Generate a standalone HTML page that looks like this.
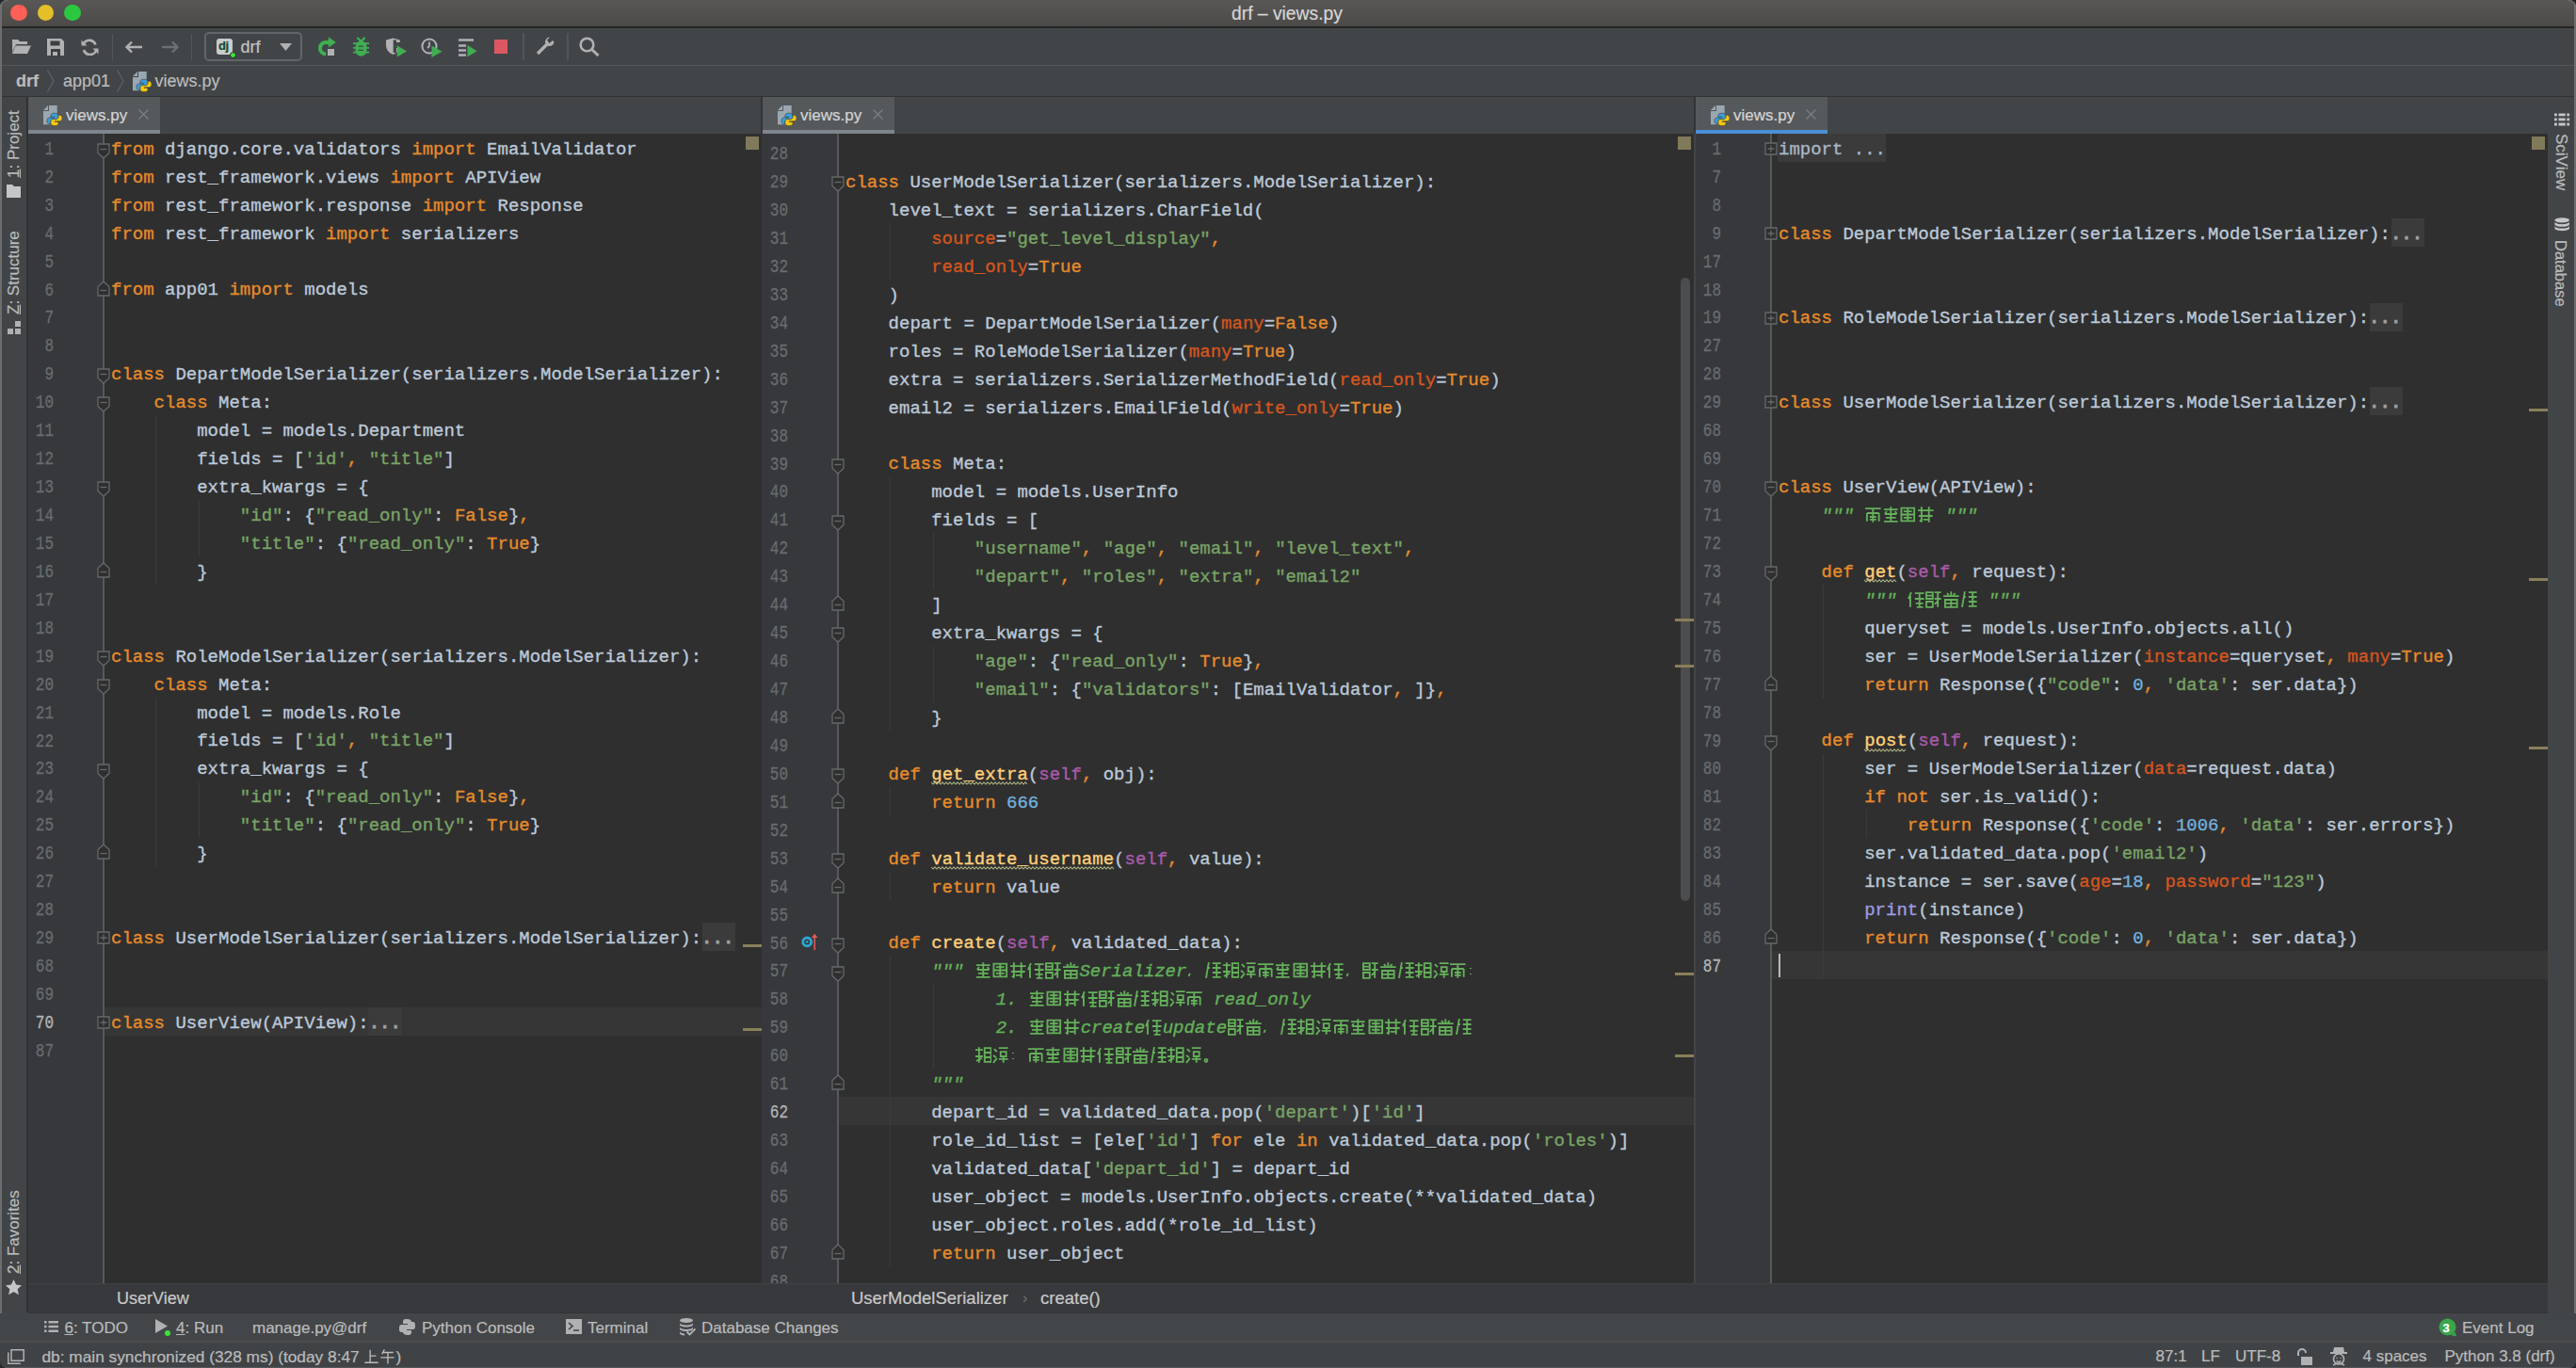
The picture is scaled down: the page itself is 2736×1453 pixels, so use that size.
<!DOCTYPE html><html><head><meta charset="utf-8"><style>
*{margin:0;padding:0;box-sizing:border-box}
html,body{width:2736px;height:1453px;overflow:hidden;background:#424548}
body{position:relative;font-family:"Liberation Sans",sans-serif}
div,svg{position:absolute}
.pane{overflow:hidden}
.ln{left:0;text-align:right;font-family:"Liberation Mono",monospace;font-size:16px;line-height:30px;-webkit-text-stroke:0.25px currentColor;transform:scaleY(1.26);transform-origin:0 19.9px}
.cl{font-family:"Liberation Mono",monospace;font-size:19px;line-height:30px;white-space:pre;color:#BCC9D9;-webkit-text-stroke:0.35px currentColor}
.cl i{font-style:normal}
.doc{color:#64B05A;font-style:italic}
.doc em{font-style:italic}
.cjs{position:static;display:inline-block;width:17px;height:17px;vertical-align:-2px;fill:none;stroke-width:1.5}
.cj{position:static;display:inline-block;width:18.6px;height:19px;vertical-align:-3px;fill:none;stroke-width:1.9}
.ph{height:30px;background:#3B3B3B}
.dots{color:#A0A0A0;-webkit-text-stroke:1.1px #A0A0A0}
.wavy{height:3px;background:repeating-linear-gradient(90deg,transparent 0 1px,#6F6F4F 1px 3px)}
.ui{font-size:17px;color:#BBBBBB;white-space:pre;line-height:20px;-webkit-text-stroke:0.2px currentColor}
.vt{transform-origin:0 0;white-space:pre;font-size:17px;color:#BBBBBB;line-height:20px;-webkit-text-stroke:0.2px currentColor}
</style></head><body>
<div style="left:0px;top:0px;width:2736px;height:28px;background:linear-gradient(#5A5856,#4C4A48)"></div>
<div style="left:0px;top:28px;width:2736px;height:2px;background:#242424"></div>
<div style="left:11.2px;top:4.7px;width:17.6px;height:17.6px;border-radius:50%;background:#FE5F57"></div>
<div style="left:39.7px;top:4.7px;width:17.6px;height:17.6px;border-radius:50%;background:#E5BF2A"></div>
<div style="left:68.2px;top:4.7px;width:17.6px;height:17.6px;border-radius:50%;background:#2AC840"></div>
<div class="ui" style="left:1308px;top:5px;font-size:19.3px;color:#D6D6D6">drf – views.py</div>
<div style="left:0px;top:30px;width:2736px;height:39px;background:#424548"></div>
<div style="left:0px;top:30px;width:2736px;height:1px;background:#484B4E"></div>
<div style="left:0px;top:69px;width:2736px;height:1.5px;background:#545658"></div>
<div style="left:0px;top:70px;width:2736px;height:32px;background:#424548"></div>
<div style="left:0px;top:102px;width:2736px;height:1px;background:#323232"></div>
<div style="left:0px;top:103px;width:28px;height:1291px;background:#424548"></div>
<div style="left:28px;top:103px;width:2px;height:1291px;background:#2F3133"></div>
<div style="left:2706px;top:103px;width:28px;height:1291px;background:#424548"></div>
<div style="left:2705px;top:103px;width:1px;height:1291px;background:#2F3133"></div>
<div style="left:0px;top:0px;width:2px;height:1453px;background:#6E6E6E"></div>
<div style="left:2734px;top:0px;width:2px;height:1453px;background:#6E6E6E"></div>
<div style="left:30px;top:103px;width:2676px;height:39px;background:#424548"></div>
<div style="left:808px;top:103px;width:2px;height:39px;#2F3133"></div>
<div style="left:30px;top:103px;width:140px;height:35px;background:#55595C"></div>
<div style="left:30px;top:138px;width:140px;height:4px;background:#7F858C"></div>
<svg style="left:45.5px;top:111.5px" width="20" height="22" viewBox="0 0 20 22"><path d="M6 0H14.7V20.2H0V6H6z" fill="#9AA7B0"/><path d="M0 5L5 0V5z" fill="#9AA7B0"/><path d="M11.8 8.2c-2.6 0-3.9 0.9-3.9 2.6v1.6h3.9v0.6H6.8c-1.7 0-2.9 1.2-2.9 3.3s1.1 3.3 2.7 3.3h1.3v-1.9c0-1.5 1-2.6 2.6-2.6h3.3c1.3 0 2.3-1 2.3-2.3v-2c0-1.5-1.4-2.6-4.3-2.6z" fill="#3D9BD6" stroke="#2B2B2B" stroke-width="0.5"/><path d="M12.2 21.6c2.6 0 3.9-0.9 3.9-2.6v-1.6h-3.9v-0.6h5.1c1.7 0 2.7-1.2 2.7-3.3s-1-3.3-2.6-3.3h-1.3v1.9c0 1.5-1 2.6-2.6 2.6h-3.3c-1.3 0-2.3 1-2.3 2.3v2c0 1.5 1.4 2.6 4.3 2.6z" fill="#F2C80F" stroke="#2B2B2B" stroke-width="0.5"/></svg>
<div class="ui" style="left:70px;top:113px;color:#D4D4D4">views.py</div>
<svg style="left:147px;top:116px" width="11" height="11" viewBox="0 0 11 11"><path d="M0.5 0.5l10 10M10.5 0.5l-10 10" stroke="#7C8084" stroke-width="1.2"/></svg>
<div style="left:810px;top:103px;width:140px;height:35px;background:#55595C"></div>
<div style="left:810px;top:138px;width:140px;height:4px;background:#7F858C"></div>
<svg style="left:825.5px;top:111.5px" width="20" height="22" viewBox="0 0 20 22"><path d="M6 0H14.7V20.2H0V6H6z" fill="#9AA7B0"/><path d="M0 5L5 0V5z" fill="#9AA7B0"/><path d="M11.8 8.2c-2.6 0-3.9 0.9-3.9 2.6v1.6h3.9v0.6H6.8c-1.7 0-2.9 1.2-2.9 3.3s1.1 3.3 2.7 3.3h1.3v-1.9c0-1.5 1-2.6 2.6-2.6h3.3c1.3 0 2.3-1 2.3-2.3v-2c0-1.5-1.4-2.6-4.3-2.6z" fill="#3D9BD6" stroke="#2B2B2B" stroke-width="0.5"/><path d="M12.2 21.6c2.6 0 3.9-0.9 3.9-2.6v-1.6h-3.9v-0.6h5.1c1.7 0 2.7-1.2 2.7-3.3s-1-3.3-2.6-3.3h-1.3v1.9c0 1.5-1 2.6-2.6 2.6h-3.3c-1.3 0-2.3 1-2.3 2.3v2c0 1.5 1.4 2.6 4.3 2.6z" fill="#F2C80F" stroke="#2B2B2B" stroke-width="0.5"/></svg>
<div class="ui" style="left:850px;top:113px;color:#D4D4D4">views.py</div>
<svg style="left:927px;top:116px" width="11" height="11" viewBox="0 0 11 11"><path d="M0.5 0.5l10 10M10.5 0.5l-10 10" stroke="#7C8084" stroke-width="1.2"/></svg>
<div style="left:1801px;top:103px;width:140px;height:35px;background:#55595C"></div>
<div style="left:1801px;top:138px;width:140px;height:4px;background:#4B8FD6"></div>
<svg style="left:1816.5px;top:111.5px" width="20" height="22" viewBox="0 0 20 22"><path d="M6 0H14.7V20.2H0V6H6z" fill="#9AA7B0"/><path d="M0 5L5 0V5z" fill="#9AA7B0"/><path d="M11.8 8.2c-2.6 0-3.9 0.9-3.9 2.6v1.6h3.9v0.6H6.8c-1.7 0-2.9 1.2-2.9 3.3s1.1 3.3 2.7 3.3h1.3v-1.9c0-1.5 1-2.6 2.6-2.6h3.3c1.3 0 2.3-1 2.3-2.3v-2c0-1.5-1.4-2.6-4.3-2.6z" fill="#3D9BD6" stroke="#2B2B2B" stroke-width="0.5"/><path d="M12.2 21.6c2.6 0 3.9-0.9 3.9-2.6v-1.6h-3.9v-0.6h5.1c1.7 0 2.7-1.2 2.7-3.3s-1-3.3-2.6-3.3h-1.3v1.9c0 1.5-1 2.6-2.6 2.6h-3.3c-1.3 0-2.3 1-2.3 2.3v2c0 1.5 1.4 2.6 4.3 2.6z" fill="#F2C80F" stroke="#2B2B2B" stroke-width="0.5"/></svg>
<div class="ui" style="left:1841px;top:113px;color:#D4D4D4">views.py</div>
<svg style="left:1918px;top:116px" width="11" height="11" viewBox="0 0 11 11"><path d="M0.5 0.5l10 10M10.5 0.5l-10 10" stroke="#7C8084" stroke-width="1.2"/></svg>
<div style="left:808px;top:103px;width:2px;height:39px;background:#323436"></div>
<div style="left:1799px;top:103px;width:2px;height:39px;background:#323436"></div>
<div class="pane" style="left:30px;top:142px;width:778.5px;height:1221px">
<div style="left:0px;top:0px;width:81px;height:1221px;background:#36383B"></div>
<div style="left:81px;top:0px;width:697.5px;height:1221px;background:#2F2F2F"></div>
<div style="left:81px;top:928.04px;width:697.5px;height:29.94px;background:#363636"></div>
<div style="left:135.22px;top:299.30000000000007px;width:1px;height:179.64000000000001px;background:#3B3B3B"></div>
<div style="left:180.94px;top:389.12px;width:1px;height:59.88px;background:#3B3B3B"></div>
<div style="left:135.22px;top:598.7px;width:1px;height:179.64000000000001px;background:#3B3B3B"></div>
<div style="left:180.94px;top:688.52px;width:1px;height:59.88px;background:#3B3B3B"></div>
<div style="left:79px;top:0px;width:1.8px;height:1221px;background:#56585A"></div>
<div class="ln" style="top:2.8000000000000056px;width:27px;color:#686C70">1</div>
<div class="cl" style="top:1.7000000000000057px;left:88px"><i style="color:#E68B2C">from</i> django.core.validators <i style="color:#E68B2C">import</i> EmailValidator</div>
<div class="ln" style="top:32.74px;width:27px;color:#686C70">2</div>
<div class="cl" style="top:31.640000000000004px;left:88px"><i style="color:#E68B2C">from</i> rest_framework.views <i style="color:#E68B2C">import</i> APIView</div>
<div class="ln" style="top:62.68px;width:27px;color:#686C70">3</div>
<div class="cl" style="top:61.58px;left:88px"><i style="color:#E68B2C">from</i> rest_framework.response <i style="color:#E68B2C">import</i> Response</div>
<div class="ln" style="top:92.62000000000003px;width:27px;color:#686C70">4</div>
<div class="cl" style="top:91.52000000000002px;left:88px"><i style="color:#E68B2C">from</i> rest_framework <i style="color:#E68B2C">import</i> serializers</div>
<div class="ln" style="top:122.56000000000003px;width:27px;color:#686C70">5</div>
<div class="ln" style="top:152.50000000000003px;width:27px;color:#686C70">6</div>
<div class="cl" style="top:151.40000000000003px;left:88px"><i style="color:#E68B2C">from</i> app01 <i style="color:#E68B2C">import</i> models</div>
<div class="ln" style="top:182.44000000000003px;width:27px;color:#686C70">7</div>
<div class="ln" style="top:212.38000000000002px;width:27px;color:#686C70">8</div>
<div class="ln" style="top:242.32000000000002px;width:27px;color:#686C70">9</div>
<div class="cl" style="top:241.22000000000003px;left:88px"><i style="color:#E68B2C">class</i> DepartModelSerializer(serializers.ModelSerializer):</div>
<div class="ln" style="top:272.26px;width:27px;color:#686C70">10</div>
<div class="cl" style="top:271.16px;left:88px">    <i style="color:#E68B2C">class</i> Meta:</div>
<div class="ln" style="top:302.20000000000005px;width:27px;color:#686C70">11</div>
<div class="cl" style="top:301.1000000000001px;left:88px">        model = models.Department</div>
<div class="ln" style="top:332.14px;width:27px;color:#686C70">12</div>
<div class="cl" style="top:331.04px;left:88px">        fields = [<i style="color:#79A366">'id'</i><i style="color:#E68B2C">,</i> <i style="color:#79A366">"title"</i>]</div>
<div class="ln" style="top:362.08000000000004px;width:27px;color:#686C70">13</div>
<div class="cl" style="top:360.9800000000001px;left:88px">        extra_kwargs = {</div>
<div class="ln" style="top:392.02px;width:27px;color:#686C70">14</div>
<div class="cl" style="top:390.92px;left:88px">            <i style="color:#79A366">"id"</i>: {<i style="color:#79A366">"read_only"</i>: <i style="color:#E68B2C">False</i>}<i style="color:#E68B2C">,</i></div>
<div class="ln" style="top:421.96000000000004px;width:27px;color:#686C70">15</div>
<div class="cl" style="top:420.86000000000007px;left:88px">            <i style="color:#79A366">"title"</i>: {<i style="color:#79A366">"read_only"</i>: <i style="color:#E68B2C">True</i>}</div>
<div class="ln" style="top:451.9px;width:27px;color:#686C70">16</div>
<div class="cl" style="top:450.8px;left:88px">        }</div>
<div class="ln" style="top:481.84000000000003px;width:27px;color:#686C70">17</div>
<div class="ln" style="top:511.78px;width:27px;color:#686C70">18</div>
<div class="ln" style="top:541.72px;width:27px;color:#686C70">19</div>
<div class="cl" style="top:540.62px;left:88px"><i style="color:#E68B2C">class</i> RoleModelSerializer(serializers.ModelSerializer):</div>
<div class="ln" style="top:571.66px;width:27px;color:#686C70">20</div>
<div class="cl" style="top:570.56px;left:88px">    <i style="color:#E68B2C">class</i> Meta:</div>
<div class="ln" style="top:601.6px;width:27px;color:#686C70">21</div>
<div class="cl" style="top:600.5px;left:88px">        model = models.Role</div>
<div class="ln" style="top:631.54px;width:27px;color:#686C70">22</div>
<div class="cl" style="top:630.4399999999999px;left:88px">        fields = [<i style="color:#79A366">'id'</i><i style="color:#E68B2C">,</i> <i style="color:#79A366">"title"</i>]</div>
<div class="ln" style="top:661.48px;width:27px;color:#686C70">23</div>
<div class="cl" style="top:660.38px;left:88px">        extra_kwargs = {</div>
<div class="ln" style="top:691.42px;width:27px;color:#686C70">24</div>
<div class="cl" style="top:690.3199999999999px;left:88px">            <i style="color:#79A366">"id"</i>: {<i style="color:#79A366">"read_only"</i>: <i style="color:#E68B2C">False</i>}<i style="color:#E68B2C">,</i></div>
<div class="ln" style="top:721.36px;width:27px;color:#686C70">25</div>
<div class="cl" style="top:720.26px;left:88px">            <i style="color:#79A366">"title"</i>: {<i style="color:#79A366">"read_only"</i>: <i style="color:#E68B2C">True</i>}</div>
<div class="ln" style="top:751.3px;width:27px;color:#686C70">26</div>
<div class="cl" style="top:750.1999999999999px;left:88px">        }</div>
<div class="ln" style="top:781.24px;width:27px;color:#686C70">27</div>
<div class="ln" style="top:811.18px;width:27px;color:#686C70">28</div>
<div class="ln" style="top:841.12px;width:27px;color:#686C70">29</div>
<div class="ph" style="top:838.22px;left:715.65px;width:35.29px"></div>
<div class="cl" style="top:840.02px;left:88px"><i style="color:#E68B2C">class</i> UserModelSerializer(serializers.ModelSerializer):<i class="dots">...</i></div>
<div class="ln" style="top:871.06px;width:27px;color:#686C70">68</div>
<div class="ln" style="top:901.0000000000001px;width:27px;color:#686C70">69</div>
<div class="ln" style="top:930.9399999999999px;width:27px;color:#B4B4B4">70</div>
<div class="ph" style="top:928.04px;left:361.32px;width:35.29px"></div>
<div class="cl" style="top:929.8399999999999px;left:88px"><i style="color:#E68B2C">class</i> UserView(APIView):<i class="dots">...</i></div>
<div class="ln" style="top:960.88px;width:27px;color:#686C70">87</div>
<svg class="fm" style="left:72.8px;top:9.900000000000006px" width="14" height="17" viewBox="0 0 14 17"><path d="M1 1h12v9.5l-6 5.5l-6-5.5z" fill="#2F2F2F" stroke="#65686A" stroke-width="1.3"/><path d="M3.5 6.5h7" stroke="#65686A" stroke-width="1.3"/></svg>
<svg class="fm" style="left:72.8px;top:155.60000000000002px" width="14" height="17" viewBox="0 0 14 17"><path d="M1 16h-0v-9.5l6-5.5l6 5.5v9.5z" fill="#2F2F2F" stroke="#65686A" stroke-width="1.3"/><path d="M3.5 10.5h7" stroke="#65686A" stroke-width="1.3"/></svg>
<svg class="fm" style="left:72.8px;top:249.42000000000002px" width="14" height="17" viewBox="0 0 14 17"><path d="M1 1h12v9.5l-6 5.5l-6-5.5z" fill="#2F2F2F" stroke="#65686A" stroke-width="1.3"/><path d="M3.5 6.5h7" stroke="#65686A" stroke-width="1.3"/></svg>
<svg class="fm" style="left:72.8px;top:279.36px" width="14" height="17" viewBox="0 0 14 17"><path d="M1 1h12v9.5l-6 5.5l-6-5.5z" fill="#2F2F2F" stroke="#65686A" stroke-width="1.3"/><path d="M3.5 6.5h7" stroke="#65686A" stroke-width="1.3"/></svg>
<svg class="fm" style="left:72.8px;top:369.18000000000006px" width="14" height="17" viewBox="0 0 14 17"><path d="M1 1h12v9.5l-6 5.5l-6-5.5z" fill="#2F2F2F" stroke="#65686A" stroke-width="1.3"/><path d="M3.5 6.5h7" stroke="#65686A" stroke-width="1.3"/></svg>
<svg class="fm" style="left:72.8px;top:455.0px" width="14" height="17" viewBox="0 0 14 17"><path d="M1 16h-0v-9.5l6-5.5l6 5.5v9.5z" fill="#2F2F2F" stroke="#65686A" stroke-width="1.3"/><path d="M3.5 10.5h7" stroke="#65686A" stroke-width="1.3"/></svg>
<svg class="fm" style="left:72.8px;top:548.82px" width="14" height="17" viewBox="0 0 14 17"><path d="M1 1h12v9.5l-6 5.5l-6-5.5z" fill="#2F2F2F" stroke="#65686A" stroke-width="1.3"/><path d="M3.5 6.5h7" stroke="#65686A" stroke-width="1.3"/></svg>
<svg class="fm" style="left:72.8px;top:578.76px" width="14" height="17" viewBox="0 0 14 17"><path d="M1 1h12v9.5l-6 5.5l-6-5.5z" fill="#2F2F2F" stroke="#65686A" stroke-width="1.3"/><path d="M3.5 6.5h7" stroke="#65686A" stroke-width="1.3"/></svg>
<svg class="fm" style="left:72.8px;top:668.58px" width="14" height="17" viewBox="0 0 14 17"><path d="M1 1h12v9.5l-6 5.5l-6-5.5z" fill="#2F2F2F" stroke="#65686A" stroke-width="1.3"/><path d="M3.5 6.5h7" stroke="#65686A" stroke-width="1.3"/></svg>
<svg class="fm" style="left:72.8px;top:754.4px" width="14" height="17" viewBox="0 0 14 17"><path d="M1 16h-0v-9.5l6-5.5l6 5.5v9.5z" fill="#2F2F2F" stroke="#65686A" stroke-width="1.3"/><path d="M3.5 10.5h7" stroke="#65686A" stroke-width="1.3"/></svg>
<svg class="fm" style="left:72.8px;top:847.22px" width="14" height="14" viewBox="0 0 14 14"><path d="M1 1h12v12h-12z" fill="#2F2F2F" stroke="#65686A" stroke-width="1.3"/><path d="M3.5 7h7M7 3.5v7" stroke="#65686A" stroke-width="1.3"/></svg>
<svg class="fm" style="left:72.8px;top:937.04px" width="14" height="14" viewBox="0 0 14 14"><path d="M1 1h12v12h-12z" fill="#2F2F2F" stroke="#65686A" stroke-width="1.3"/><path d="M3.5 7h7M7 3.5v7" stroke="#65686A" stroke-width="1.3"/></svg>
<div style="left:761.5px;top:3px;width:14px;height:14px;background:#807A5A"></div>
<div style="left:758.5px;top:861px;width:20px;height:3px;background:#8A7F5A"></div>
<div style="left:758.5px;top:950px;width:20px;height:3px;background:#8A7F5A"></div>

</div>
<div class="pane" style="left:808.5px;top:142px;width:990.5px;height:1221px">
<div style="left:0px;top:0px;width:82.5px;height:1221px;background:#36383B"></div>
<div style="left:82.5px;top:0px;width:908px;height:1221px;background:#2F2F2F"></div>
<div style="left:82.5px;top:1023.26px;width:908px;height:29.94px;background:#363636"></div>
<div style="left:136.72000000000003px;top:95.12px;width:1px;height:59.88px;background:#3B3B3B"></div>
<div style="left:136.72000000000003px;top:364.58000000000004px;width:1px;height:269.46000000000004px;background:#3B3B3B"></div>
<div style="left:182.44000000000005px;top:424.46000000000004px;width:1px;height:59.88px;background:#3B3B3B"></div>
<div style="left:182.44000000000005px;top:544.22px;width:1px;height:59.88px;background:#3B3B3B"></div>
<div style="left:136.72000000000003px;top:693.9200000000001px;width:1px;height:29.94px;background:#3B3B3B"></div>
<div style="left:136.72000000000003px;top:783.74px;width:1px;height:29.94px;background:#3B3B3B"></div>
<div style="left:136.72000000000003px;top:873.56px;width:1px;height:329.34000000000003px;background:#3B3B3B"></div>
<div style="left:182.44000000000005px;top:903.5px;width:1px;height:89.82000000000001px;background:#3B3B3B"></div>
<div style="left:80.5px;top:0px;width:1.8px;height:1221px;background:#56585A"></div>
<div class="ln" style="top:8.200000000000012px;width:28.5px;color:#686C70">28</div>
<div class="ln" style="top:38.14000000000001px;width:28.5px;color:#686C70">29</div>
<div class="cl" style="top:37.040000000000006px;left:89.5px"><i style="color:#E68B2C">class</i> UserModelSerializer(serializers.ModelSerializer):</div>
<div class="ln" style="top:68.08000000000001px;width:28.5px;color:#686C70">30</div>
<div class="cl" style="top:66.98px;left:89.5px">    level_text = serializers.CharField(</div>
<div class="ln" style="top:98.02000000000001px;width:28.5px;color:#686C70">31</div>
<div class="cl" style="top:96.92px;left:89.5px">        <i style="color:#D4561F">source</i>=<i style="color:#79A366">"get_level_display"</i><i style="color:#E68B2C">,</i></div>
<div class="ln" style="top:127.96000000000001px;width:28.5px;color:#686C70">32</div>
<div class="cl" style="top:126.86px;left:89.5px">        <i style="color:#D4561F">read_only</i>=<i style="color:#E68B2C">True</i></div>
<div class="ln" style="top:157.9px;width:28.5px;color:#686C70">33</div>
<div class="cl" style="top:156.8px;left:89.5px">    )</div>
<div class="ln" style="top:187.84000000000006px;width:28.5px;color:#686C70">34</div>
<div class="cl" style="top:186.74000000000007px;left:89.5px">    depart = DepartModelSerializer(<i style="color:#D4561F">many</i>=<i style="color:#E68B2C">False</i>)</div>
<div class="ln" style="top:217.78px;width:28.5px;color:#686C70">35</div>
<div class="cl" style="top:216.68px;left:89.5px">    roles = RoleModelSerializer(<i style="color:#D4561F">many</i>=<i style="color:#E68B2C">True</i>)</div>
<div class="ln" style="top:247.72000000000006px;width:28.5px;color:#686C70">36</div>
<div class="cl" style="top:246.62000000000006px;left:89.5px">    extra = serializers.SerializerMethodField(<i style="color:#D4561F">read_only</i>=<i style="color:#E68B2C">True</i>)</div>
<div class="ln" style="top:277.66px;width:28.5px;color:#686C70">37</div>
<div class="cl" style="top:276.56000000000006px;left:89.5px">    email2 = serializers.EmailField(<i style="color:#D4561F">write_only</i>=<i style="color:#E68B2C">True</i>)</div>
<div class="ln" style="top:307.6px;width:28.5px;color:#686C70">38</div>
<div class="ln" style="top:337.54px;width:28.5px;color:#686C70">39</div>
<div class="cl" style="top:336.44000000000005px;left:89.5px">    <i style="color:#E68B2C">class</i> Meta:</div>
<div class="ln" style="top:367.48px;width:28.5px;color:#686C70">40</div>
<div class="cl" style="top:366.38000000000005px;left:89.5px">        model = models.UserInfo</div>
<div class="ln" style="top:397.41999999999996px;width:28.5px;color:#686C70">41</div>
<div class="cl" style="top:396.32px;left:89.5px">        fields = [</div>
<div class="ln" style="top:427.36px;width:28.5px;color:#686C70">42</div>
<div class="cl" style="top:426.26000000000005px;left:89.5px">            <i style="color:#79A366">"username"</i><i style="color:#E68B2C">,</i> <i style="color:#79A366">"age"</i><i style="color:#E68B2C">,</i> <i style="color:#79A366">"email"</i><i style="color:#E68B2C">,</i> <i style="color:#79A366">"level_text"</i><i style="color:#E68B2C">,</i></div>
<div class="ln" style="top:457.30000000000007px;width:28.5px;color:#686C70">43</div>
<div class="cl" style="top:456.2000000000001px;left:89.5px">            <i style="color:#79A366">"depart"</i><i style="color:#E68B2C">,</i> <i style="color:#79A366">"roles"</i><i style="color:#E68B2C">,</i> <i style="color:#79A366">"extra"</i><i style="color:#E68B2C">,</i> <i style="color:#79A366">"email2"</i></div>
<div class="ln" style="top:487.24px;width:28.5px;color:#686C70">44</div>
<div class="cl" style="top:486.14000000000004px;left:89.5px">        ]</div>
<div class="ln" style="top:517.18px;width:28.5px;color:#686C70">45</div>
<div class="cl" style="top:516.0799999999999px;left:89.5px">        extra_kwargs = {</div>
<div class="ln" style="top:547.12px;width:28.5px;color:#686C70">46</div>
<div class="cl" style="top:546.02px;left:89.5px">            <i style="color:#79A366">"age"</i>: {<i style="color:#79A366">"read_only"</i>: <i style="color:#E68B2C">True</i>}<i style="color:#E68B2C">,</i></div>
<div class="ln" style="top:577.0600000000001px;width:28.5px;color:#686C70">47</div>
<div class="cl" style="top:575.96px;left:89.5px">            <i style="color:#79A366">"email"</i>: {<i style="color:#79A366">"validators"</i>: [EmailValidator<i style="color:#E68B2C">,</i> ]}<i style="color:#E68B2C">,</i></div>
<div class="ln" style="top:607.0000000000001px;width:28.5px;color:#686C70">48</div>
<div class="cl" style="top:605.9000000000001px;left:89.5px">        }</div>
<div class="ln" style="top:636.9399999999999px;width:28.5px;color:#686C70">49</div>
<div class="ln" style="top:666.88px;width:28.5px;color:#686C70">50</div>
<div class="cl" style="top:665.78px;left:89.5px">    <i style="color:#E68B2C">def</i> <i style="color:#FFD078">get_extra</i>(<i style="color:#A95BAB">self</i><i style="color:#E68B2C">,</i> obj):</div>
<div class="ln" style="top:696.82px;width:28.5px;color:#686C70">51</div>
<div class="cl" style="top:695.72px;left:89.5px">        <i style="color:#E68B2C">return</i> <i style="color:#72B0DE">666</i></div>
<div class="ln" style="top:726.7600000000001px;width:28.5px;color:#686C70">52</div>
<div class="ln" style="top:756.6999999999999px;width:28.5px;color:#686C70">53</div>
<div class="cl" style="top:755.5999999999999px;left:89.5px">    <i style="color:#E68B2C">def</i> <i style="color:#FFD078">validate_username</i>(<i style="color:#A95BAB">self</i><i style="color:#E68B2C">,</i> value):</div>
<div class="ln" style="top:786.64px;width:28.5px;color:#686C70">54</div>
<div class="cl" style="top:785.54px;left:89.5px">        <i style="color:#E68B2C">return</i> value</div>
<div class="ln" style="top:816.58px;width:28.5px;color:#686C70">55</div>
<div class="ln" style="top:846.5200000000001px;width:28.5px;color:#686C70">56</div>
<div class="cl" style="top:845.4200000000001px;left:89.5px">    <i style="color:#E68B2C">def</i> <i style="color:#FFD078">create</i>(<i style="color:#A95BAB">self</i><i style="color:#E68B2C">,</i> validated_data):</div>
<div class="ln" style="top:876.4599999999999px;width:28.5px;color:#686C70">57</div>
<div class="cl doc" style="top:875.3599999999999px;left:89.5px">        """ <svg class="cj" viewBox="0 0 19 19"><path d="M2 4h15M9.5 1v17M3 9h13M4 13h11M2 17h15M5 6l-2 3M14 6l2 3" stroke="#64B05A"/></svg><svg class="cj" viewBox="0 0 19 19"><path d="M2.5 2.5h14v14h-14zM2.5 9.5h14M9.5 2.5v14M5 6h9M5 13h9" stroke="#64B05A"/></svg><svg class="cj" viewBox="0 0 19 19"><path d="M1 5h17M5 1v17M13 1v17M2 11h15M7 15h5M3 17l3-3" stroke="#64B05A"/></svg><svg class="cj" viewBox="0 0 19 19"><path d="M4 2l-3 7M3 6v12M8 3h10M13 3v15M8 9h10M9 14h8M10 18h7" stroke="#64B05A"/></svg><svg class="cj" viewBox="0 0 19 19"><path d="M2 2h7v7h-7zM2 5.5h7M11 2h7M14.5 2v16M11 9h7M2 12h7v6h-7zM11 15l3-3" stroke="#64B05A"/></svg><svg class="cj" viewBox="0 0 19 19"><path d="M1 6h17M9.5 1v5M3 10h13v8h-13zM3 14h13M9.5 10v8M5 3l2 2M14 3l-2 2" stroke="#64B05A"/></svg><em>Serializer</em><svg class="cj" viewBox="0 0 19 19"><path d="M4 13l-1.5 3" stroke="#64B05A"/></svg><svg class="cj" viewBox="0 0 19 19"><path d="M5 1l-3 17M3 7h3M9 2h9M9 7h9M9 12h9M9 17h9M13.5 2v15" stroke="#64B05A"/></svg><svg class="cj" viewBox="0 0 19 19"><path d="M1 4h8M5 1v17M1 11h8M2 16l6-3M11 2h7v15h-7zM11 7h7M11 12h7" stroke="#64B05A"/></svg><svg class="cj" viewBox="0 0 19 19"><path d="M3 3l3 3M2 10l3 2M2 18l4-5M8 2h10M10 6h6v5h-6zM8 14h10M13 11v7" stroke="#64B05A"/></svg><svg class="cj" viewBox="0 0 19 19"><path d="M1 3h17M9.5 3v15M3 8h13M3 8v9M16 8v9M6 12h7M6 15h7" stroke="#64B05A"/></svg><svg class="cj" viewBox="0 0 19 19"><path d="M2 4h15M9.5 1v17M3 9h13M4 13h11M2 17h15M5 6l-2 3M14 6l2 3" stroke="#64B05A"/></svg><svg class="cj" viewBox="0 0 19 19"><path d="M2.5 2.5h14v14h-14zM2.5 9.5h14M9.5 2.5v14M5 6h9M5 13h9" stroke="#64B05A"/></svg><svg class="cj" viewBox="0 0 19 19"><path d="M1 5h17M5 1v17M13 1v17M2 11h15M7 15h5M3 17l3-3" stroke="#64B05A"/></svg><svg class="cj" viewBox="0 0 19 19"><path d="M4 2l-3 7M3 6v12M8 3h10M13 3v15M8 9h10M9 14h8M10 18h7" stroke="#64B05A"/></svg><svg class="cj" viewBox="0 0 19 19"><path d="M4 13l-1.5 3" stroke="#64B05A"/></svg><svg class="cj" viewBox="0 0 19 19"><path d="M2 2h7v7h-7zM2 5.5h7M11 2h7M14.5 2v16M11 9h7M2 12h7v6h-7zM11 15l3-3" stroke="#64B05A"/></svg><svg class="cj" viewBox="0 0 19 19"><path d="M1 6h17M9.5 1v5M3 10h13v8h-13zM3 14h13M9.5 10v8M5 3l2 2M14 3l-2 2" stroke="#64B05A"/></svg><svg class="cj" viewBox="0 0 19 19"><path d="M5 1l-3 17M3 7h3M9 2h9M9 7h9M9 12h9M9 17h9M13.5 2v15" stroke="#64B05A"/></svg><svg class="cj" viewBox="0 0 19 19"><path d="M1 4h8M5 1v17M1 11h8M2 16l6-3M11 2h7v15h-7zM11 7h7M11 12h7" stroke="#64B05A"/></svg><svg class="cj" viewBox="0 0 19 19"><path d="M3 3l3 3M2 10l3 2M2 18l4-5M8 2h10M10 6h6v5h-6zM8 14h10M13 11v7" stroke="#64B05A"/></svg><svg class="cj" viewBox="0 0 19 19"><path d="M1 3h17M9.5 3v15M3 8h13M3 8v9M16 8v9M6 12h7M6 15h7" stroke="#64B05A"/></svg><svg class="cj" viewBox="0 0 19 19"><path d="M4 7v1M4 13v1" stroke="#64B05A"/></svg></div>
<div class="ln" style="top:906.4px;width:28.5px;color:#686C70">58</div>
<div class="cl doc" style="top:905.3px;left:89.5px">              1. <svg class="cj" viewBox="0 0 19 19"><path d="M2 4h15M9.5 1v17M3 9h13M4 13h11M2 17h15M5 6l-2 3M14 6l2 3" stroke="#64B05A"/></svg><svg class="cj" viewBox="0 0 19 19"><path d="M2.5 2.5h14v14h-14zM2.5 9.5h14M9.5 2.5v14M5 6h9M5 13h9" stroke="#64B05A"/></svg><svg class="cj" viewBox="0 0 19 19"><path d="M1 5h17M5 1v17M13 1v17M2 11h15M7 15h5M3 17l3-3" stroke="#64B05A"/></svg><svg class="cj" viewBox="0 0 19 19"><path d="M4 2l-3 7M3 6v12M8 3h10M13 3v15M8 9h10M9 14h8M10 18h7" stroke="#64B05A"/></svg><svg class="cj" viewBox="0 0 19 19"><path d="M2 2h7v7h-7zM2 5.5h7M11 2h7M14.5 2v16M11 9h7M2 12h7v6h-7zM11 15l3-3" stroke="#64B05A"/></svg><svg class="cj" viewBox="0 0 19 19"><path d="M1 6h17M9.5 1v5M3 10h13v8h-13zM3 14h13M9.5 10v8M5 3l2 2M14 3l-2 2" stroke="#64B05A"/></svg><svg class="cj" viewBox="0 0 19 19"><path d="M5 1l-3 17M3 7h3M9 2h9M9 7h9M9 12h9M9 17h9M13.5 2v15" stroke="#64B05A"/></svg><svg class="cj" viewBox="0 0 19 19"><path d="M1 4h8M5 1v17M1 11h8M2 16l6-3M11 2h7v15h-7zM11 7h7M11 12h7" stroke="#64B05A"/></svg><svg class="cj" viewBox="0 0 19 19"><path d="M3 3l3 3M2 10l3 2M2 18l4-5M8 2h10M10 6h6v5h-6zM8 14h10M13 11v7" stroke="#64B05A"/></svg><svg class="cj" viewBox="0 0 19 19"><path d="M1 3h17M9.5 3v15M3 8h13M3 8v9M16 8v9M6 12h7M6 15h7" stroke="#64B05A"/></svg> <em>read_only</em></div>
<div class="ln" style="top:936.34px;width:28.5px;color:#686C70">59</div>
<div class="cl doc" style="top:935.24px;left:89.5px">              2. <svg class="cj" viewBox="0 0 19 19"><path d="M2 4h15M9.5 1v17M3 9h13M4 13h11M2 17h15M5 6l-2 3M14 6l2 3" stroke="#64B05A"/></svg><svg class="cj" viewBox="0 0 19 19"><path d="M2.5 2.5h14v14h-14zM2.5 9.5h14M9.5 2.5v14M5 6h9M5 13h9" stroke="#64B05A"/></svg><svg class="cj" viewBox="0 0 19 19"><path d="M1 5h17M5 1v17M13 1v17M2 11h15M7 15h5M3 17l3-3" stroke="#64B05A"/></svg><em>create</em><svg class="cj" viewBox="0 0 19 19"><path d="M4 2l-3 7M3 6v12M8 3h10M13 3v15M8 9h10M9 14h8M10 18h7" stroke="#64B05A"/></svg><em>update</em><svg class="cj" viewBox="0 0 19 19"><path d="M2 2h7v7h-7zM2 5.5h7M11 2h7M14.5 2v16M11 9h7M2 12h7v6h-7zM11 15l3-3" stroke="#64B05A"/></svg><svg class="cj" viewBox="0 0 19 19"><path d="M1 6h17M9.5 1v5M3 10h13v8h-13zM3 14h13M9.5 10v8M5 3l2 2M14 3l-2 2" stroke="#64B05A"/></svg><svg class="cj" viewBox="0 0 19 19"><path d="M4 13l-1.5 3" stroke="#64B05A"/></svg><svg class="cj" viewBox="0 0 19 19"><path d="M5 1l-3 17M3 7h3M9 2h9M9 7h9M9 12h9M9 17h9M13.5 2v15" stroke="#64B05A"/></svg><svg class="cj" viewBox="0 0 19 19"><path d="M1 4h8M5 1v17M1 11h8M2 16l6-3M11 2h7v15h-7zM11 7h7M11 12h7" stroke="#64B05A"/></svg><svg class="cj" viewBox="0 0 19 19"><path d="M3 3l3 3M2 10l3 2M2 18l4-5M8 2h10M10 6h6v5h-6zM8 14h10M13 11v7" stroke="#64B05A"/></svg><svg class="cj" viewBox="0 0 19 19"><path d="M1 3h17M9.5 3v15M3 8h13M3 8v9M16 8v9M6 12h7M6 15h7" stroke="#64B05A"/></svg><svg class="cj" viewBox="0 0 19 19"><path d="M2 4h15M9.5 1v17M3 9h13M4 13h11M2 17h15M5 6l-2 3M14 6l2 3" stroke="#64B05A"/></svg><svg class="cj" viewBox="0 0 19 19"><path d="M2.5 2.5h14v14h-14zM2.5 9.5h14M9.5 2.5v14M5 6h9M5 13h9" stroke="#64B05A"/></svg><svg class="cj" viewBox="0 0 19 19"><path d="M1 5h17M5 1v17M13 1v17M2 11h15M7 15h5M3 17l3-3" stroke="#64B05A"/></svg><svg class="cj" viewBox="0 0 19 19"><path d="M4 2l-3 7M3 6v12M8 3h10M13 3v15M8 9h10M9 14h8M10 18h7" stroke="#64B05A"/></svg><svg class="cj" viewBox="0 0 19 19"><path d="M2 2h7v7h-7zM2 5.5h7M11 2h7M14.5 2v16M11 9h7M2 12h7v6h-7zM11 15l3-3" stroke="#64B05A"/></svg><svg class="cj" viewBox="0 0 19 19"><path d="M1 6h17M9.5 1v5M3 10h13v8h-13zM3 14h13M9.5 10v8M5 3l2 2M14 3l-2 2" stroke="#64B05A"/></svg><svg class="cj" viewBox="0 0 19 19"><path d="M5 1l-3 17M3 7h3M9 2h9M9 7h9M9 12h9M9 17h9M13.5 2v15" stroke="#64B05A"/></svg></div>
<div class="ln" style="top:966.2800000000001px;width:28.5px;color:#686C70">60</div>
<div class="cl doc" style="top:965.1800000000001px;left:89.5px">            <svg class="cj" viewBox="0 0 19 19"><path d="M1 4h8M5 1v17M1 11h8M2 16l6-3M11 2h7v15h-7zM11 7h7M11 12h7" stroke="#64B05A"/></svg><svg class="cj" viewBox="0 0 19 19"><path d="M3 3l3 3M2 10l3 2M2 18l4-5M8 2h10M10 6h6v5h-6zM8 14h10M13 11v7" stroke="#64B05A"/></svg><svg class="cj" viewBox="0 0 19 19"><path d="M4 7v1M4 13v1" stroke="#64B05A"/></svg><svg class="cj" viewBox="0 0 19 19"><path d="M1 3h17M9.5 3v15M3 8h13M3 8v9M16 8v9M6 12h7M6 15h7" stroke="#64B05A"/></svg><svg class="cj" viewBox="0 0 19 19"><path d="M2 4h15M9.5 1v17M3 9h13M4 13h11M2 17h15M5 6l-2 3M14 6l2 3" stroke="#64B05A"/></svg><svg class="cj" viewBox="0 0 19 19"><path d="M2.5 2.5h14v14h-14zM2.5 9.5h14M9.5 2.5v14M5 6h9M5 13h9" stroke="#64B05A"/></svg><svg class="cj" viewBox="0 0 19 19"><path d="M1 5h17M5 1v17M13 1v17M2 11h15M7 15h5M3 17l3-3" stroke="#64B05A"/></svg><svg class="cj" viewBox="0 0 19 19"><path d="M4 2l-3 7M3 6v12M8 3h10M13 3v15M8 9h10M9 14h8M10 18h7" stroke="#64B05A"/></svg><svg class="cj" viewBox="0 0 19 19"><path d="M2 2h7v7h-7zM2 5.5h7M11 2h7M14.5 2v16M11 9h7M2 12h7v6h-7zM11 15l3-3" stroke="#64B05A"/></svg><svg class="cj" viewBox="0 0 19 19"><path d="M1 6h17M9.5 1v5M3 10h13v8h-13zM3 14h13M9.5 10v8M5 3l2 2M14 3l-2 2" stroke="#64B05A"/></svg><svg class="cj" viewBox="0 0 19 19"><path d="M5 1l-3 17M3 7h3M9 2h9M9 7h9M9 12h9M9 17h9M13.5 2v15" stroke="#64B05A"/></svg><svg class="cj" viewBox="0 0 19 19"><path d="M1 4h8M5 1v17M1 11h8M2 16l6-3M11 2h7v15h-7zM11 7h7M11 12h7" stroke="#64B05A"/></svg><svg class="cj" viewBox="0 0 19 19"><path d="M3 3l3 3M2 10l3 2M2 18l4-5M8 2h10M10 6h6v5h-6zM8 14h10M13 11v7" stroke="#64B05A"/></svg><svg class="cj" viewBox="0 0 19 19"><path d="M4 14a1.5 1.5 0 1 0 0.1 0" stroke="#64B05A"/></svg></div>
<div class="ln" style="top:996.2200000000001px;width:28.5px;color:#686C70">61</div>
<div class="cl doc" style="top:995.1200000000001px;left:89.5px">        """</div>
<div class="ln" style="top:1026.16px;width:28.5px;color:#B4B4B4">62</div>
<div class="cl" style="top:1025.06px;left:89.5px">        depart_id = validated_data.pop(<i style="color:#79A366">'depart'</i>)[<i style="color:#79A366">'id'</i>]</div>
<div class="ln" style="top:1056.1000000000001px;width:28.5px;color:#686C70">63</div>
<div class="cl" style="top:1055.0px;left:89.5px">        role_id_list = [ele[<i style="color:#79A366">'id'</i>] <i style="color:#E68B2C">for</i> ele <i style="color:#E68B2C">in</i> validated_data.pop(<i style="color:#79A366">'roles'</i>)]</div>
<div class="ln" style="top:1086.0400000000002px;width:28.5px;color:#686C70">64</div>
<div class="cl" style="top:1084.94px;left:89.5px">        validated_data[<i style="color:#79A366">'depart_id'</i>] = depart_id</div>
<div class="ln" style="top:1115.98px;width:28.5px;color:#686C70">65</div>
<div class="cl" style="top:1114.8799999999999px;left:89.5px">        user_object = models.UserInfo.objects.create(**validated_data)</div>
<div class="ln" style="top:1145.92px;width:28.5px;color:#686C70">66</div>
<div class="cl" style="top:1144.82px;left:89.5px">        user_object.roles.add(*role_id_list)</div>
<div class="ln" style="top:1175.8600000000001px;width:28.5px;color:#686C70">67</div>
<div class="cl" style="top:1174.76px;left:89.5px">        <i style="color:#E68B2C">return</i> user_object</div>
<div class="ln" style="top:1205.8000000000002px;width:28.5px;color:#686C70">68</div>
<svg style="left:180.94px;top:687.98px" width="102.87" height="4"><polyline points="0 0.8 2 3 4 0.8 6 3 8 0.8 10 3 12 0.8 14 3 16 0.8 18 3 20 0.8 22 3 24 0.8 26 3 28 0.8 30 3 32 0.8 34 3 36 0.8 38 3 40 0.8 42 3 44 0.8 46 3 48 0.8 50 3 52 0.8 54 3 56 0.8 58 3 60 0.8 62 3 64 0.8 66 3 68 0.8 70 3 72 0.8 74 3 76 0.8 78 3 80 0.8 82 3 84 0.8 86 3 88 0.8 90 3 92 0.8 94 3 96 0.8 98 3 100 0.8 102 3" fill="none" stroke="#A9AE80" stroke-width="1.1"/></svg>
<svg style="left:180.94px;top:777.8px" width="194.31" height="4"><polyline points="0 0.8 2 3 4 0.8 6 3 8 0.8 10 3 12 0.8 14 3 16 0.8 18 3 20 0.8 22 3 24 0.8 26 3 28 0.8 30 3 32 0.8 34 3 36 0.8 38 3 40 0.8 42 3 44 0.8 46 3 48 0.8 50 3 52 0.8 54 3 56 0.8 58 3 60 0.8 62 3 64 0.8 66 3 68 0.8 70 3 72 0.8 74 3 76 0.8 78 3 80 0.8 82 3 84 0.8 86 3 88 0.8 90 3 92 0.8 94 3 96 0.8 98 3 100 0.8 102 3 104 0.8 106 3 108 0.8 110 3 112 0.8 114 3 116 0.8 118 3 120 0.8 122 3 124 0.8 126 3 128 0.8 130 3 132 0.8 134 3 136 0.8 138 3 140 0.8 142 3 144 0.8 146 3 148 0.8 150 3 152 0.8 154 3 156 0.8 158 3 160 0.8 162 3 164 0.8 166 3 168 0.8 170 3 172 0.8 174 3 176 0.8 178 3 180 0.8 182 3 184 0.8 186 3 188 0.8 190 3 192 0.8 194 3" fill="none" stroke="#A9AE80" stroke-width="1.1"/></svg>
<svg class="fm" style="left:74.3px;top:45.24000000000001px" width="14" height="17" viewBox="0 0 14 17"><path d="M1 1h12v9.5l-6 5.5l-6-5.5z" fill="#2F2F2F" stroke="#65686A" stroke-width="1.3"/><path d="M3.5 6.5h7" stroke="#65686A" stroke-width="1.3"/></svg>
<svg class="fm" style="left:74.3px;top:344.64000000000004px" width="14" height="17" viewBox="0 0 14 17"><path d="M1 1h12v9.5l-6 5.5l-6-5.5z" fill="#2F2F2F" stroke="#65686A" stroke-width="1.3"/><path d="M3.5 6.5h7" stroke="#65686A" stroke-width="1.3"/></svg>
<svg class="fm" style="left:74.3px;top:404.52px" width="14" height="17" viewBox="0 0 14 17"><path d="M1 1h12v9.5l-6 5.5l-6-5.5z" fill="#2F2F2F" stroke="#65686A" stroke-width="1.3"/><path d="M3.5 6.5h7" stroke="#65686A" stroke-width="1.3"/></svg>
<svg class="fm" style="left:74.3px;top:490.34000000000003px" width="14" height="17" viewBox="0 0 14 17"><path d="M1 16h-0v-9.5l6-5.5l6 5.5v9.5z" fill="#2F2F2F" stroke="#65686A" stroke-width="1.3"/><path d="M3.5 10.5h7" stroke="#65686A" stroke-width="1.3"/></svg>
<svg class="fm" style="left:74.3px;top:524.28px" width="14" height="17" viewBox="0 0 14 17"><path d="M1 1h12v9.5l-6 5.5l-6-5.5z" fill="#2F2F2F" stroke="#65686A" stroke-width="1.3"/><path d="M3.5 6.5h7" stroke="#65686A" stroke-width="1.3"/></svg>
<svg class="fm" style="left:74.3px;top:610.1000000000001px" width="14" height="17" viewBox="0 0 14 17"><path d="M1 16h-0v-9.5l6-5.5l6 5.5v9.5z" fill="#2F2F2F" stroke="#65686A" stroke-width="1.3"/><path d="M3.5 10.5h7" stroke="#65686A" stroke-width="1.3"/></svg>
<svg class="fm" style="left:74.3px;top:673.98px" width="14" height="17" viewBox="0 0 14 17"><path d="M1 1h12v9.5l-6 5.5l-6-5.5z" fill="#2F2F2F" stroke="#65686A" stroke-width="1.3"/><path d="M3.5 6.5h7" stroke="#65686A" stroke-width="1.3"/></svg>
<svg class="fm" style="left:74.3px;top:699.9200000000001px" width="14" height="17" viewBox="0 0 14 17"><path d="M1 16h-0v-9.5l6-5.5l6 5.5v9.5z" fill="#2F2F2F" stroke="#65686A" stroke-width="1.3"/><path d="M3.5 10.5h7" stroke="#65686A" stroke-width="1.3"/></svg>
<svg class="fm" style="left:74.3px;top:763.8px" width="14" height="17" viewBox="0 0 14 17"><path d="M1 1h12v9.5l-6 5.5l-6-5.5z" fill="#2F2F2F" stroke="#65686A" stroke-width="1.3"/><path d="M3.5 6.5h7" stroke="#65686A" stroke-width="1.3"/></svg>
<svg class="fm" style="left:74.3px;top:789.74px" width="14" height="17" viewBox="0 0 14 17"><path d="M1 16h-0v-9.5l6-5.5l6 5.5v9.5z" fill="#2F2F2F" stroke="#65686A" stroke-width="1.3"/><path d="M3.5 10.5h7" stroke="#65686A" stroke-width="1.3"/></svg>
<svg class="fm" style="left:74.3px;top:853.6200000000001px" width="14" height="17" viewBox="0 0 14 17"><path d="M1 1h12v9.5l-6 5.5l-6-5.5z" fill="#2F2F2F" stroke="#65686A" stroke-width="1.3"/><path d="M3.5 6.5h7" stroke="#65686A" stroke-width="1.3"/></svg>
<svg class="fm" style="left:74.3px;top:883.56px" width="14" height="17" viewBox="0 0 14 17"><path d="M1 1h12v9.5l-6 5.5l-6-5.5z" fill="#2F2F2F" stroke="#65686A" stroke-width="1.3"/><path d="M3.5 6.5h7" stroke="#65686A" stroke-width="1.3"/></svg>
<svg class="fm" style="left:74.3px;top:999.3200000000002px" width="14" height="17" viewBox="0 0 14 17"><path d="M1 16h-0v-9.5l6-5.5l6 5.5v9.5z" fill="#2F2F2F" stroke="#65686A" stroke-width="1.3"/><path d="M3.5 10.5h7" stroke="#65686A" stroke-width="1.3"/></svg>
<svg class="fm" style="left:74.3px;top:1178.96px" width="14" height="17" viewBox="0 0 14 17"><path d="M1 16h-0v-9.5l6-5.5l6 5.5v9.5z" fill="#2F2F2F" stroke="#65686A" stroke-width="1.3"/><path d="M3.5 10.5h7" stroke="#65686A" stroke-width="1.3"/></svg>
<div style="left:976.5px;top:153px;width:10px;height:662px;background:#4C4D4E;border-radius:5px"></div>
<div style="left:973.5px;top:3px;width:14px;height:14px;background:#807A5A"></div>
<div style="left:970.5px;top:515px;width:20px;height:3px;background:#8A7F5A"></div>
<div style="left:970.5px;top:564px;width:20px;height:3px;background:#8A7F5A"></div>
<div style="left:970.5px;top:891px;width:20px;height:3px;background:#8A7F5A"></div>
<div style="left:970.5px;top:978px;width:20px;height:3px;background:#8A7F5A"></div>
<svg style="left:42px;top:848px" width="20" height="20" viewBox="0 0 20 20"><circle cx="6.2" cy="10.4" r="4.4" fill="none" stroke="#2EA6CF" stroke-width="2.9"/><circle cx="6.2" cy="10.4" r="1.3" fill="#2EA6CF"/><path d="M13.4 5.5h1.6V19h-1.6z" fill="#E35A5C"/><path d="M10.9 6l3.3-4.2l3.3 4.2z" fill="#E35A5C"/></svg>
</div>
<div class="pane" style="left:1801px;top:142px;width:905px;height:1221px">
<div style="left:0px;top:0px;width:81px;height:1221px;background:#36383B"></div>
<div style="left:81px;top:0px;width:824px;height:1221px;background:#2F2F2F"></div>
<div style="left:81px;top:868.16px;width:824px;height:29.94px;background:#363636"></div>
<div style="left:135.22000000000003px;top:478.94000000000005px;width:1px;height:119.76px;background:#3B3B3B"></div>
<div style="left:135.22000000000003px;top:658.58px;width:1px;height:239.52px;background:#3B3B3B"></div>
<div style="left:180.94000000000005px;top:718.46px;width:1px;height:29.94px;background:#3B3B3B"></div>
<div style="left:79px;top:0px;width:1.8px;height:1221px;background:#56585A"></div>
<div class="ln" style="top:2.8000000000000056px;width:27px;color:#686C70">1</div>
<div class="ph" style="top:-0.09999999999999432px;left:87px;width:115.3px"></div>
<div class="cl" style="top:1.7000000000000057px;left:88px;color:#A9B7C6">import ...</div>
<div class="ln" style="top:32.74px;width:27px;color:#686C70">7</div>
<div class="ln" style="top:62.68px;width:27px;color:#686C70">8</div>
<div class="ln" style="top:92.62000000000003px;width:27px;color:#686C70">9</div>
<div class="ph" style="top:89.72000000000003px;left:738.51px;width:35.29px"></div>
<div class="cl" style="top:91.52000000000002px;left:88px"><i style="color:#E68B2C">class</i> DepartModelSerializer(serializers.ModelSerializer):<i class="dots">...</i></div>
<div class="ln" style="top:122.56000000000003px;width:27px;color:#686C70">17</div>
<div class="ln" style="top:152.50000000000003px;width:27px;color:#686C70">18</div>
<div class="ln" style="top:182.44000000000003px;width:27px;color:#686C70">19</div>
<div class="ph" style="top:179.54000000000002px;left:715.65px;width:35.29px"></div>
<div class="cl" style="top:181.34000000000003px;left:88px"><i style="color:#E68B2C">class</i> RoleModelSerializer(serializers.ModelSerializer):<i class="dots">...</i></div>
<div class="ln" style="top:212.38000000000002px;width:27px;color:#686C70">27</div>
<div class="ln" style="top:242.32000000000002px;width:27px;color:#686C70">28</div>
<div class="ln" style="top:272.26px;width:27px;color:#686C70">29</div>
<div class="ph" style="top:269.36px;left:715.65px;width:35.29px"></div>
<div class="cl" style="top:271.16px;left:88px"><i style="color:#E68B2C">class</i> UserModelSerializer(serializers.ModelSerializer):<i class="dots">...</i></div>
<div class="ln" style="top:302.20000000000005px;width:27px;color:#686C70">68</div>
<div class="ln" style="top:332.14px;width:27px;color:#686C70">69</div>
<div class="ln" style="top:362.08000000000004px;width:27px;color:#686C70">70</div>
<div class="cl" style="top:360.9800000000001px;left:88px"><i style="color:#E68B2C">class</i> UserView(APIView):</div>
<div class="ln" style="top:392.02px;width:27px;color:#686C70">71</div>
<div class="cl doc" style="top:390.92px;left:88px">    """ <svg class="cj" viewBox="0 0 19 19"><path d="M1 3h17M9.5 3v15M3 8h13M3 8v9M16 8v9M6 12h7M6 15h7" stroke="#64B05A"/></svg><svg class="cj" viewBox="0 0 19 19"><path d="M2 4h15M9.5 1v17M3 9h13M4 13h11M2 17h15M5 6l-2 3M14 6l2 3" stroke="#64B05A"/></svg><svg class="cj" viewBox="0 0 19 19"><path d="M2.5 2.5h14v14h-14zM2.5 9.5h14M9.5 2.5v14M5 6h9M5 13h9" stroke="#64B05A"/></svg><svg class="cj" viewBox="0 0 19 19"><path d="M1 5h17M5 1v17M13 1v17M2 11h15M7 15h5M3 17l3-3" stroke="#64B05A"/></svg> """</div>
<div class="ln" style="top:421.96000000000004px;width:27px;color:#686C70">72</div>
<div class="ln" style="top:451.9px;width:27px;color:#686C70">73</div>
<div class="cl" style="top:450.8px;left:88px">    <i style="color:#E68B2C">def</i> <i style="color:#FFD078">get</i>(<i style="color:#A95BAB">self</i><i style="color:#E68B2C">,</i> request):</div>
<div class="ln" style="top:481.84000000000003px;width:27px;color:#686C70">74</div>
<div class="cl doc" style="top:480.74000000000007px;left:88px">        """ <svg class="cj" viewBox="0 0 19 19"><path d="M4 2l-3 7M3 6v12M8 3h10M13 3v15M8 9h10M9 14h8M10 18h7" stroke="#64B05A"/></svg><svg class="cj" viewBox="0 0 19 19"><path d="M2 2h7v7h-7zM2 5.5h7M11 2h7M14.5 2v16M11 9h7M2 12h7v6h-7zM11 15l3-3" stroke="#64B05A"/></svg><svg class="cj" viewBox="0 0 19 19"><path d="M1 6h17M9.5 1v5M3 10h13v8h-13zM3 14h13M9.5 10v8M5 3l2 2M14 3l-2 2" stroke="#64B05A"/></svg><svg class="cj" viewBox="0 0 19 19"><path d="M5 1l-3 17M3 7h3M9 2h9M9 7h9M9 12h9M9 17h9M13.5 2v15" stroke="#64B05A"/></svg> """</div>
<div class="ln" style="top:511.78px;width:27px;color:#686C70">75</div>
<div class="cl" style="top:510.68px;left:88px">        queryset = models.UserInfo.objects.all()</div>
<div class="ln" style="top:541.72px;width:27px;color:#686C70">76</div>
<div class="cl" style="top:540.62px;left:88px">        ser = UserModelSerializer(<i style="color:#D4561F">instance</i>=queryset<i style="color:#E68B2C">,</i> <i style="color:#D4561F">many</i>=<i style="color:#E68B2C">True</i>)</div>
<div class="ln" style="top:571.66px;width:27px;color:#686C70">77</div>
<div class="cl" style="top:570.56px;left:88px">        <i style="color:#E68B2C">return</i> Response({<i style="color:#79A366">"code"</i>: <i style="color:#72B0DE">0</i><i style="color:#E68B2C">,</i> <i style="color:#79A366">'data'</i>: ser.data})</div>
<div class="ln" style="top:601.6px;width:27px;color:#686C70">78</div>
<div class="ln" style="top:631.54px;width:27px;color:#686C70">79</div>
<div class="cl" style="top:630.4399999999999px;left:88px">    <i style="color:#E68B2C">def</i> <i style="color:#FFD078">post</i>(<i style="color:#A95BAB">self</i><i style="color:#E68B2C">,</i> request):</div>
<div class="ln" style="top:661.48px;width:27px;color:#686C70">80</div>
<div class="cl" style="top:660.38px;left:88px">        ser = UserModelSerializer(<i style="color:#D4561F">data</i>=request.data)</div>
<div class="ln" style="top:691.42px;width:27px;color:#686C70">81</div>
<div class="cl" style="top:690.3199999999999px;left:88px">        <i style="color:#E68B2C">if</i> <i style="color:#E68B2C">not</i> ser.is_valid():</div>
<div class="ln" style="top:721.36px;width:27px;color:#686C70">82</div>
<div class="cl" style="top:720.26px;left:88px">            <i style="color:#E68B2C">return</i> Response({<i style="color:#79A366">'code'</i>: <i style="color:#72B0DE">1006</i><i style="color:#E68B2C">,</i> <i style="color:#79A366">'data'</i>: ser.errors})</div>
<div class="ln" style="top:751.3px;width:27px;color:#686C70">83</div>
<div class="cl" style="top:750.1999999999999px;left:88px">        ser.validated_data.pop(<i style="color:#79A366">'email2'</i>)</div>
<div class="ln" style="top:781.24px;width:27px;color:#686C70">84</div>
<div class="cl" style="top:780.14px;left:88px">        instance = ser.save(<i style="color:#D4561F">age</i>=<i style="color:#72B0DE">18</i><i style="color:#E68B2C">,</i> <i style="color:#D4561F">password</i>=<i style="color:#79A366">"123"</i>)</div>
<div class="ln" style="top:811.18px;width:27px;color:#686C70">85</div>
<div class="cl" style="top:810.0799999999999px;left:88px">        <i style="color:#9B9BE2">print</i>(instance)</div>
<div class="ln" style="top:841.12px;width:27px;color:#686C70">86</div>
<div class="cl" style="top:840.02px;left:88px">        <i style="color:#E68B2C">return</i> Response({<i style="color:#79A366">'code'</i>: <i style="color:#72B0DE">0</i><i style="color:#E68B2C">,</i> <i style="color:#79A366">'data'</i>: ser.data})</div>
<div class="ln" style="top:871.06px;width:27px;color:#B4B4B4">87</div>
<svg style="left:179.44px;top:473.0px" width="34.29" height="4"><polyline points="0 0.8 2 3 4 0.8 6 3 8 0.8 10 3 12 0.8 14 3 16 0.8 18 3 20 0.8 22 3 24 0.8 26 3 28 0.8 30 3 32 0.8 34 3" fill="none" stroke="#A9AE80" stroke-width="1.1"/></svg>
<svg style="left:179.44px;top:652.64px" width="45.72" height="4"><polyline points="0 0.8 2 3 4 0.8 6 3 8 0.8 10 3 12 0.8 14 3 16 0.8 18 3 20 0.8 22 3 24 0.8 26 3 28 0.8 30 3 32 0.8 34 3 36 0.8 38 3 40 0.8 42 3 44 0.8" fill="none" stroke="#A9AE80" stroke-width="1.1"/></svg>
<svg class="fm" style="left:72.8px;top:8.900000000000006px" width="14" height="14" viewBox="0 0 14 14"><path d="M1 1h12v12h-12z" fill="#2F2F2F" stroke="#65686A" stroke-width="1.3"/><path d="M3.5 7h7M7 3.5v7" stroke="#65686A" stroke-width="1.3"/></svg>
<svg class="fm" style="left:72.8px;top:98.72000000000003px" width="14" height="14" viewBox="0 0 14 14"><path d="M1 1h12v12h-12z" fill="#2F2F2F" stroke="#65686A" stroke-width="1.3"/><path d="M3.5 7h7M7 3.5v7" stroke="#65686A" stroke-width="1.3"/></svg>
<svg class="fm" style="left:72.8px;top:188.54000000000002px" width="14" height="14" viewBox="0 0 14 14"><path d="M1 1h12v12h-12z" fill="#2F2F2F" stroke="#65686A" stroke-width="1.3"/><path d="M3.5 7h7M7 3.5v7" stroke="#65686A" stroke-width="1.3"/></svg>
<svg class="fm" style="left:72.8px;top:278.36px" width="14" height="14" viewBox="0 0 14 14"><path d="M1 1h12v12h-12z" fill="#2F2F2F" stroke="#65686A" stroke-width="1.3"/><path d="M3.5 7h7M7 3.5v7" stroke="#65686A" stroke-width="1.3"/></svg>
<svg class="fm" style="left:72.8px;top:369.18000000000006px" width="14" height="17" viewBox="0 0 14 17"><path d="M1 1h12v9.5l-6 5.5l-6-5.5z" fill="#2F2F2F" stroke="#65686A" stroke-width="1.3"/><path d="M3.5 6.5h7" stroke="#65686A" stroke-width="1.3"/></svg>
<svg class="fm" style="left:72.8px;top:459.0px" width="14" height="17" viewBox="0 0 14 17"><path d="M1 1h12v9.5l-6 5.5l-6-5.5z" fill="#2F2F2F" stroke="#65686A" stroke-width="1.3"/><path d="M3.5 6.5h7" stroke="#65686A" stroke-width="1.3"/></svg>
<svg class="fm" style="left:72.8px;top:574.76px" width="14" height="17" viewBox="0 0 14 17"><path d="M1 16h-0v-9.5l6-5.5l6 5.5v9.5z" fill="#2F2F2F" stroke="#65686A" stroke-width="1.3"/><path d="M3.5 10.5h7" stroke="#65686A" stroke-width="1.3"/></svg>
<svg class="fm" style="left:72.8px;top:638.64px" width="14" height="17" viewBox="0 0 14 17"><path d="M1 1h12v9.5l-6 5.5l-6-5.5z" fill="#2F2F2F" stroke="#65686A" stroke-width="1.3"/><path d="M3.5 6.5h7" stroke="#65686A" stroke-width="1.3"/></svg>
<svg class="fm" style="left:72.8px;top:844.22px" width="14" height="17" viewBox="0 0 14 17"><path d="M1 16h-0v-9.5l6-5.5l6 5.5v9.5z" fill="#2F2F2F" stroke="#65686A" stroke-width="1.3"/><path d="M3.5 10.5h7" stroke="#65686A" stroke-width="1.3"/></svg>
<div style="left:888px;top:3px;width:14px;height:14px;background:#807A5A"></div>
<div style="left:885px;top:292px;width:20px;height:3px;background:#8A7F5A"></div>
<div style="left:885px;top:472px;width:20px;height:3px;background:#8A7F5A"></div>
<div style="left:885px;top:651px;width:20px;height:3px;background:#8A7F5A"></div>

</div>
<div style="left:1889px;top:1013px;width:2px;height:25px;background:#BBBBBB"></div>
<div style="left:30px;top:1363px;width:2676px;height:31px;background:#38393C"></div>
<div style="left:30px;top:1363px;width:2676px;height:1px;background:#404246"></div>
<div style="left:30px;top:1394px;width:2676px;height:1px;background:#333436"></div>
<div class="ui" style="left:124px;top:1369px;font-size:18px;color:#C8C8C8">UserView</div>
<div class="ui" style="left:904px;top:1369px;font-size:18.5px;color:#C8C8C8">UserModelSerializer</div>
<div class="ui" style="left:1086px;top:1369px;font-size:16px;color:#6E7072">›</div>
<div class="ui" style="left:1105px;top:1369px;font-size:18.5px;color:#C8C8C8">create()</div>
<div style="left:0px;top:1395px;width:2736px;height:29px;background:#434649"></div>
<div style="left:0px;top:1424px;width:2736px;height:1.5px;background:#4D4D4D"></div>
<div style="left:0px;top:1425.5px;width:2736px;height:27.5px;background:#404346"></div>
<div style="left:0px;top:1452px;width:2736px;height:1px;background:#55585A"></div>
<svg style="left:12px;top:41px" width="22" height="17" viewBox="0 0 22 17"><path d="M1 1h6l2 2h8v3H5L1 14z" fill="#AFB1B3"/><path d="M4.5 7.5h16.5l-4 8.5H0.8z" fill="#AFB1B3"/></svg>
<svg style="left:49.5px;top:41px" width="18" height="18" viewBox="0 0 18 18"><path d="M0 0h15l3 3v15H0z" fill="#AFB1B3"/><path d="M3.5 2.5h10v5h-10z" fill="#3C3F41"/><path d="M4 11h10v7H4z" fill="#3C3F41"/><path d="M6 14h5v4H6z" fill="#AFB1B3"/></svg>
<svg style="left:86px;top:40.5px" width="19" height="18" viewBox="0 0 19 18"><path d="M15.5 6.5A7 7 0 0 0 3 5" fill="none" stroke="#AFB1B3" stroke-width="2.6"/><path d="M3 12A7 7 0 0 0 16 13" fill="none" stroke="#AFB1B3" stroke-width="2.6"/><path d="M0.5 1.5v6h6z" fill="#AFB1B3"/><path d="M18.5 16.5v-6h-6z" fill="#AFB1B3"/></svg>
<div style="left:118.5px;top:35.5px;width:1.5px;height:28px;background:#535658"></div>
<svg style="left:132px;top:42.5px" width="20" height="14" viewBox="0 0 20 14"><path d="M19 7H3M8 1.5L2.5 7L8 12.5" fill="none" stroke="#AFB1B3" stroke-width="2.4"/></svg>
<svg style="left:170.5px;top:42.5px" width="20" height="14" viewBox="0 0 20 14"><path d="M1 7h16M12 1.5L17.5 7L12 12.5" fill="none" stroke="#6D7072" stroke-width="2.4"/></svg>
<div style="left:202.5px;top:35.5px;width:1.5px;height:28px;background:#535658"></div>
<div style="left:217px;top:34px;width:104px;height:31px;border:2px solid #636668;border-radius:5px"></div>
<div style="left:229.5px;top:41px;width:17px;height:17px;background:#C9CBCC;border-radius:3px"></div>
<div class="ui" style="left:232px;top:38.5px;font-size:13px;font-weight:bold;color:#0C4B33;letter-spacing:-0.5px">dj</div>
<div style="left:243.5px;top:55px;width:7px;height:7px;border-radius:50%;background:#3BE13B;border:1px solid #2A2C2E"></div>
<div class="ui" style="left:255.5px;top:40px;font-size:18px;color:#C4C4C4">drf</div>
<svg style="left:297px;top:46px" width="13" height="8" viewBox="0 0 13 8"><path d="M0 0h13L6.5 8z" fill="#AFB1B3"/></svg>
<svg style="left:337px;top:39px" width="21" height="22" viewBox="0 0 21 22"><path d="M12.5 5.9H9.2A6.3 6.3 0 0 0 9.2 18.5" fill="none" stroke="#3FAF52" stroke-width="4"/><path d="M11.8 0.3L19.9 5.9L11.8 11.4z" fill="#3FAF52"/><path d="M11 13h7v7h-7z" fill="#AFB1B3"/></svg>
<svg style="left:375px;top:39px" width="18" height="21" viewBox="0 0 18 21"><path d="M5 1.5L8.5 5L12 1.5" fill="none" stroke="#3FAF52" stroke-width="2.2" stroke-linecap="round"/><path d="M8.5 4.5c3.5 0 6 2.5 6 6.5v3c0 4-2.5 6.5-6 6.5s-6-2.5-6-6.5v-3c0-4 2.5-6.5 6-6.5z" fill="#3FAF52"/><path d="M0 7.2h17M0 11.9h17M0 16.6h17" stroke="#3FAF52" stroke-width="1.8"/><path d="M5.6 9.4h5.4v1.4H5.6zM5.6 13.7h5.4v1.4H5.6z" fill="#424548"/></svg>
<svg style="left:410px;top:40px" width="23" height="21" viewBox="0 0 23 21"><path d="M0 2.5L7.4 0.5L14.8 2.5V8c0 5-3.5 8.5-7.4 10C3.5 16.5 0 13 0 8z" fill="#AFB1B3"/><path d="M7.7 2.6H11V16H7.7zM11 5.1h4v6h-4z" fill="#424548"/><path d="M11.8 8.2l10.2 6.2L11.8 20.6z" fill="#3FAF52"/></svg>
<svg style="left:447px;top:40px" width="23" height="21" viewBox="0 0 23 21"><circle cx="9" cy="9" r="7.6" fill="none" stroke="#AFB1B3" stroke-width="2"/><path d="M9 4.5v4.5l-2 2" fill="none" stroke="#AFB1B3" stroke-width="1.8"/><path d="M11.5 8.5l11 6.2L11.5 21z" fill="#3FAF52"/></svg>
<svg style="left:485.5px;top:41px" width="21" height="20" viewBox="0 0 21 20"><path d="M1 1.5h16M1 7.5h8M1 12.5h8M1 17.5h8" stroke="#AFB1B3" stroke-width="2.4"/><path d="M10.5 7l10 6.3L10.5 19.5z" fill="#3FAF52"/></svg>
<div style="left:524.5px;top:42px;width:14.5px;height:15px;background:#DB5860"></div>
<div style="left:555px;top:35px;width:1.5px;height:29px;background:#535658"></div>
<svg style="left:569px;top:39px" width="21" height="20" viewBox="0 0 21 20"><path d="M19.5 5.5a5 5 0 0 1-6.8 4.2L3.2 19.2L0.8 16.8l9.5-9.5A5 5 0 0 1 15 0.5l-3 3l2.5 3.5l3.5-3z" fill="#AFB1B3"/></svg>
<div style="left:602px;top:35px;width:1.5px;height:29px;background:#535658"></div>
<svg style="left:615px;top:39px" width="22" height="21" viewBox="0 0 22 21"><circle cx="8.5" cy="8.5" r="6.8" fill="none" stroke="#AFB1B3" stroke-width="2.6"/><path d="M13.5 13.5l7 6.5" stroke="#AFB1B3" stroke-width="3"/></svg>
<div class="ui" style="left:17px;top:76px;font-size:18px;font-weight:bold;color:#BBBBBB">drf</div>
<svg style="left:50px;top:74px" width="8" height="24" viewBox="0 0 8 24"><path d="M0.5 0.5l6.5 11.5l-6.5 11.5" fill="none" stroke="#5E6163" stroke-width="1.3"/></svg>
<div class="ui" style="left:67px;top:76px;font-size:18px;color:#BBBBBB">app01</div>
<svg style="left:124px;top:74px" width="8" height="24" viewBox="0 0 8 24"><path d="M0.5 0.5l6.5 11.5l-6.5 11.5" fill="none" stroke="#5E6163" stroke-width="1.3"/></svg>
<svg style="left:140.5px;top:76px" width="20" height="22" viewBox="0 0 20 22"><path d="M6 0H14.7V20.2H0V6H6z" fill="#9AA7B0"/><path d="M0 5L5 0V5z" fill="#9AA7B0"/><path d="M11.8 8.2c-2.6 0-3.9 0.9-3.9 2.6v1.6h3.9v0.6H6.8c-1.7 0-2.9 1.2-2.9 3.3s1.1 3.3 2.7 3.3h1.3v-1.9c0-1.5 1-2.6 2.6-2.6h3.3c1.3 0 2.3-1 2.3-2.3v-2c0-1.5-1.4-2.6-4.3-2.6z" fill="#3D9BD6" stroke="#2B2B2B" stroke-width="0.5"/><path d="M12.2 21.6c2.6 0 3.9-0.9 3.9-2.6v-1.6h-3.9v-0.6h5.1c1.7 0 2.7-1.2 2.7-3.3s-1-3.3-2.6-3.3h-1.3v1.9c0 1.5-1 2.6-2.6 2.6h-3.3c-1.3 0-2.3 1-2.3 2.3v2c0 1.5 1.4 2.6 4.3 2.6z" fill="#F2C80F" stroke="#2B2B2B" stroke-width="0.5"/></svg>
<div class="ui" style="left:164.5px;top:76px;font-size:18px;color:#BBBBBB">views.py</div>
<div class="vt" style="left:4.5px;top:189px;font-size:17px;transform:rotate(-90deg)"><u>1</u>: Project</div>
<svg style="left:7px;top:196px" width="15" height="14" viewBox="0 0 15 14"><path d="M0 0h6l2 2h7v12H0z" fill="#C4C6C8"/></svg>
<div class="vt" style="left:4.5px;top:334px;font-size:17px;transform:rotate(-90deg)"><u>Z</u>: Structure</div>
<svg style="left:8px;top:341px" width="14" height="14" viewBox="0 0 14 14"><path d="M0 8h6v6H0zM8 8h6v6H8zM8 0h6v6H8z" fill="#AFB1B3"/></svg>
<div class="vt" style="left:4.5px;top:1353px;font-size:17px;transform:rotate(-90deg)"><u>2</u>: Favorites</div>
<svg style="left:5.5px;top:1359px" width="17" height="17" viewBox="0 0 17 17"><path d="M8.5 0l2.6 5.6l6 0.6l-4.5 4l1.3 6l-5.4-3.1l-5.4 3.1l1.3-6l-4.5-4l6-0.6z" fill="#C4C6C8"/></svg>
<div class="vt" style="left:2730.3px;top:142px;font-size:17px;transform:rotate(90deg)">SciView</div>
<svg style="left:2713px;top:120px" width="17" height="14" viewBox="0 0 17 14"><path d="M0 0.4h2.8v2.8H0zM4.5 0.4h7.2v2.8H4.5zM13.3 0.4h2.8v2.8h-2.8zM0 5.4h2.8v2.8H0zM4.5 5.4h7.2v2.8H4.5zM13.3 5.4h2.8v2.8h-2.8zM0 10.4h2.8v3H0zM4.5 10.4h7.2v3H4.5zM13.3 10.4h2.8v3h-2.8z" fill="#C4C6C8"/></svg>
<svg style="left:2713px;top:231px" width="17" height="16" viewBox="0 0 17 16"><ellipse cx="8.2" cy="2.8" rx="7.8" ry="2.6" fill="#C4C6C8"/><path d="M0.4 4.6c0 1.5 3.5 2.6 7.8 2.6s7.8-1.1 7.8-2.6v2.6c0 1.5-3.5 2.6-7.8 2.6S0.4 8.7 0.4 7.2zM0.4 9c0 1.5 3.5 2.6 7.8 2.6S16 10.5 16 9v2.6c0 1.5-3.5 2.6-7.8 2.6S0.4 13.1 0.4 11.6z" fill="#C4C6C8"/></svg>
<div class="vt" style="left:2730.3px;top:254.5px;font-size:16.5px;transform:rotate(90deg)">Database</div>
<svg style="left:47px;top:1402px" width="15" height="14" viewBox="0 0 15 14"><path d="M0 1h2.5v2.5H0zM4.5 1H15v2.5H4.5zM0 5.8h2.5v2.5H0zM4.5 5.8H15v2.5H4.5zM0 10.5h2.5V13H0zM4.5 10.5H15V13H4.5z" fill="#AFB1B3"/></svg>
<div class="ui" style="left:68.5px;top:1401px"><u>6</u>: TODO</div>
<svg style="left:164px;top:1401px" width="17" height="18" viewBox="0 0 17 18"><path d="M1 0l13 7.5L1 15z" fill="#AFB1B3"/><circle cx="14" cy="15" r="3" fill="#3BE13B"/></svg>
<div class="ui" style="left:187px;top:1401px"><u>4</u>: Run</div>
<div class="ui" style="left:268px;top:1401px">manage.py@drf</div>
<svg style="left:424px;top:1401px" width="17" height="17" viewBox="0 0 17 17"><path d="M8 0C4 0 4 2 4 3v2h5v1H2C0 6 0 9 0 10s0 4 2 4h2v-2c0-2 1-3 3-3h4c1.5 0 2-1 2-2V3c0-2-2-3-5-3z" fill="#AFB1B3"/><path d="M9 17c4 0 4-2 4-3v-2H8v-1h7c2 0 2-3 2-4s0-4-2-4h-2v2c0 2-1 3-3 3H6c-1.5 0-2 1-2 2v4c0 2 2 3 5 3z" fill="#AFB1B3"/></svg>
<div class="ui" style="left:448px;top:1401px">Python Console</div>
<svg style="left:601px;top:1401px" width="17" height="16" viewBox="0 0 17 16"><path d="M0 0h17v16H0z" fill="#AFB1B3"/><path d="M3 4l4 3.5L3 11M8 12h6" fill="none" stroke="#3C3F41" stroke-width="1.6"/></svg>
<div class="ui" style="left:624px;top:1401px">Terminal</div>
<svg style="left:721px;top:1400px" width="18" height="19" viewBox="0 0 18 19"><ellipse cx="8" cy="2.5" rx="7" ry="2.5" fill="#AFB1B3"/><path d="M1 5c0 1.5 3 2.5 7 2.5s7-1 7-2.5v2c0 1.5-3 2.5-7 2.5S1 8.5 1 7zM1 9.5c0 1.5 3 2.5 7 2.5s7-1 7-2.5v2c0 1.5-3 2.5-7 2.5S1 13 1 11.5zM1 14c0 1.5 3 2.5 5 2.5v2c-2 0-5-1-5-2.5z" fill="#AFB1B3"/><path d="M8.5 14.5l3 3l6-6" fill="none" stroke="#AFB1B3" stroke-width="1.8"/></svg>
<div class="ui" style="left:745px;top:1401px">Database Changes</div>
<svg style="left:2590px;top:1400px" width="20" height="20" viewBox="0 0 20 20"><circle cx="9.5" cy="9.5" r="9" fill="#3BA64A"/><path d="M13 18l6 1.5l-1.5-5z" fill="#3BA64A"/></svg>
<div class="ui" style="left:2594.5px;top:1401px;font-size:13px;font-weight:bold;color:#FFFFFF">3</div>
<div class="ui" style="left:2615px;top:1401px">Event Log</div>
<svg style="left:8px;top:1433px" width="18" height="16" viewBox="0 0 18 16"><path d="M4 0.8h13.2v11.5H4z" fill="none" stroke="#AFB1B3" stroke-width="1.5"/><path d="M0.8 3.5v11.7h13" fill="none" stroke="#AFB1B3" stroke-width="1.5"/></svg>
<div class="ui" style="left:44.5px;top:1431px;font-size:17.3px">db: main synchronized (328 ms) (today 8:47 <svg class="cjs" viewBox="0 0 19 19"><path d="M8 2v15M8 9h7M1.5 17h16" stroke="#BBBBBB"/></svg><svg class="cjs" viewBox="0 0 19 19"><path d="M6 1.5l-3 5.5M4.5 5h12M1.5 11h16M10 5v13.5" stroke="#BBBBBB"/></svg>)</div>
<div class="ui" style="left:2289.5px;top:1431px">87:1</div>
<div class="ui" style="left:2338px;top:1431px">LF</div>
<div class="ui" style="left:2374px;top:1431px">UTF-8</div>
<svg style="left:2439px;top:1432px" width="17" height="19" viewBox="0 0 17 19"><path d="M2 8V5a4 4 0 0 1 8 0" fill="none" stroke="#AFB1B3" stroke-width="2"/><path d="M5 9h12v9H5z" fill="#AFB1B3"/></svg>
<svg style="left:2475px;top:1431px" width="18" height="20" viewBox="0 0 18 20"><path d="M4 0h10l1 5h3v2H0V5h3z" fill="#AFB1B3"/><circle cx="9" cy="12.5" r="5.5" fill="none" stroke="#AFB1B3" stroke-width="1.6"/><path d="M6.5 11.5h1M10.5 11.5h1M6.5 14.5q2.5 2 5 0" stroke="#AFB1B3" stroke-width="1.4" fill="none"/><path d="M3 19q6-4 12 0" stroke="#AFB1B3" stroke-width="1.6" fill="none"/></svg>
<div class="ui" style="left:2509.5px;top:1431px">4 spaces</div>
<div class="ui" style="left:2596.5px;top:1431px">Python 3.8 (drf)</div>
<svg style="left:0;top:0" width="8" height="8" viewBox="0 0 8 8"><path d="M0 0H7A7 7 0 0 0 0 7z" fill="#26292C"/><path d="M0.5 7.5A7 7 0 0 1 7.5 0.5" fill="none" stroke="#7A7A7A" stroke-width="1"/></svg>
<svg style="left:2728px;top:0" width="8" height="8" viewBox="0 0 8 8"><path d="M8 0H1A7 7 0 0 1 8 7z" fill="#26292C"/><path d="M0.5 0.5A7 7 0 0 1 7.5 7.5" fill="none" stroke="#7A7A7A" stroke-width="1"/></svg>
<svg style="left:0;top:1445px" width="8" height="8" viewBox="0 0 8 8"><path d="M0 8H7A7 7 0 0 1 0 1z" fill="#26292C"/></svg>
<svg style="left:2728px;top:1445px" width="8" height="8" viewBox="0 0 8 8"><path d="M8 8H1A7 7 0 0 0 8 1z" fill="#26292C"/></svg>
</body></html>
